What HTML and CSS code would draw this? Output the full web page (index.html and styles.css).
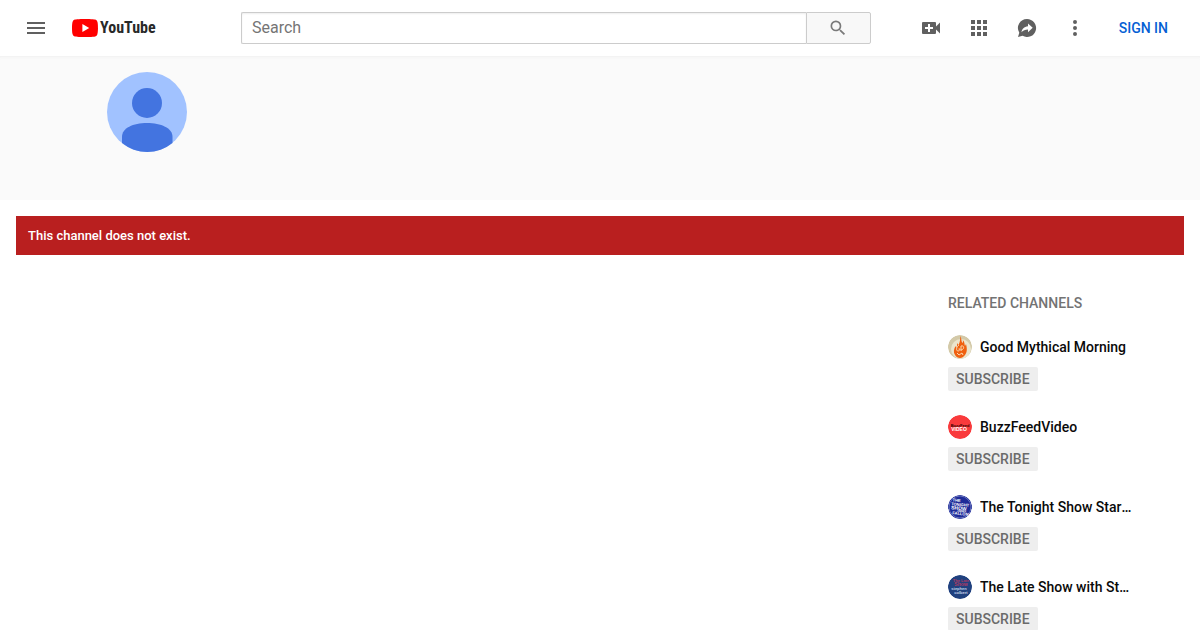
FILE: index.html
```html
<!DOCTYPE html>
<html lang="en">
<head>
    <meta charset="UTF-8">
    <meta name="viewport" content="width=device-width, initial-scale=1.0">
    <title>YouTube</title>
    <link rel="stylesheet" href="styles.css">
</head>
<body>
    <header class="masthead">
        <div class="start">
            <button class="icon-btn" aria-label="Guide">
                <svg viewBox="0 0 24 24"><path d="M3 18h18v-2H3v2zm0-5h18v-2H3v2zm0-7v2h18V6H3z"/></svg>
            </button>
            <a class="logo" href="/" aria-label="YouTube Home">
                <svg viewBox="0 0 26 18">
                    <path fill="#f00" d="M25.4 2.8A3.2 3.2 0 0 0 23.2.6C21.2 0 13 0 13 0S4.8 0 2.8.6A3.2 3.2 0 0 0 .6 2.8C0 4.8 0 9 0 9s0 4.2.6 6.2a3.2 3.2 0 0 0 2.2 2.2C4.8 18 13 18 13 18s8.2 0 10.2-.6a3.2 3.2 0 0 0 2.2-2.2C26 13.2 26 9 26 9s0-4.2-.6-6.2z"/>
                    <path fill="#fff" d="M10.4 12.9 17.2 9l-6.8-3.9z"/>
                </svg>
                <span>YouTube</span>
            </a>
        </div>
        <form class="search" role="search">
            <input type="text" placeholder="Search" aria-label="Search" autocomplete="off">
            <button aria-label="Search button">
                <svg viewBox="0 0 24 24"><path d="M15.5 14h-.79l-.28-.27A6.471 6.471 0 0 0 16 9.5 6.5 6.5 0 1 0 9.5 16c1.61 0 3.09-.59 4.23-1.57l.27.28v.79l5 4.99L20.49 19l-4.99-5zm-6 0C7.01 14 5 11.99 5 9.5S7.01 5 9.5 5 14 7.01 14 9.5 11.99 14 9.5 14z"/></svg>
            </button>
        </form>
        <div class="end">
            <button class="icon-btn" aria-label="Create">
                <svg viewBox="0 0 24 24"><path d="M17 10.5V7a1 1 0 0 0-1-1H4a1 1 0 0 0-1 1v10a1 1 0 0 0 1 1h12a1 1 0 0 0 1-1v-3.5l4 4v-11l-4 4zM14 13h-3v3H9v-3H6v-2h3V8h2v3h3v2z"/></svg>
            </button>
            <button class="icon-btn" aria-label="YouTube apps">
                <svg viewBox="0 0 24 24"><path d="M4 8h4V4H4v4zm6 12h4v-4h-4v4zm-6 0h4v-4H4v4zm0-6h4v-4H4v4zm6 0h4v-4h-4v4zm6-10v4h4V4h-4zm-6 4h4V4h-4v4zm6 6h4v-4h-4v4zm0 6h4v-4h-4v4z"/></svg>
            </button>
            <button class="icon-btn" aria-label="Messages">
                <svg viewBox="0 0 24 24">
                    <path d="M12 3a9 9 0 0 0-7.700 13.700L3 21l4.600-1.200A9 9 0 1 0 12 3z"/>
                    <path fill="#fff" d="M13 7.500v2.700c-4 .4-6 2.800-6.500 6 1.700-2 3.600-2.800 6.500-2.800v2.800l4.700-4.400z"/>
                </svg>
            </button>
            <button class="icon-btn" aria-label="Settings">
                <svg viewBox="0 0 24 24"><path d="M12 8a2 2 0 1 0 0-4 2 2 0 0 0 0 4zm0 2a2 2 0 1 0 0 4 2 2 0 0 0 0-4zm0 6a2 2 0 1 0 0 4 2 2 0 0 0 0-4z"/></svg>
            </button>
            <a class="sign-in" href="/signin">SIGN IN</a>
        </div>
    </header>

    <section class="channel-header">
        <svg class="channel-avatar" viewBox="0 0 80 80">
            <circle cx="40" cy="40" r="40" fill="#a1c2ff"/>
            <circle cx="40" cy="31" r="15" fill="#4374e0"/>
            <path fill="#4374e0" d="M15 71V65C15 56 26 51 40 51s25.500 5 25.500 14v6A40 40 0 0 1 15 71z"/>
        </svg>
    </section>

    <main>
        <div class="alert" role="alert">This channel does not exist.</div>
        <aside class="related">
            <h2>RELATED CHANNELS</h2>
            <ul>
                <li>
                    <a class="channel" href="/good-mythical-morning">
                        <svg viewBox="0 0 24 24">
                            <circle cx="12" cy="12" r="12" fill="#d3c9a8"/>
                            <circle cx="13" cy="14" r="10" fill="#ebe4cc"/>
                            <path fill="#f0600f" d="M12 1c2 3 1 5 2.500 7 .7-1 .5-2 .3-3 2 2 1.500 4 2.200 6l1-2c1 4 1.500 8-1 11-1.500 2-3 3-5 3s-4-1-5-3c-2-3-1-6 .5-9l.7 2c1-2 1-3 .8-5l1.500 2C12 7 12.500 4 12 1z"/>
                            <path fill="none" stroke="#f9d9b0" d="M11 10c-3 2-3 6-1 6 1 0 2-1 2-2h-1.500M13 11v5m0-5c4-1 3 4 0 4M9 18l2 2 3-2 1 2"/>
                        </svg>
                        <span>Good Mythical Morning</span>
                    </a>
                    <button class="subscribe">SUBSCRIBE</button>
                </li>
                <li>
                    <a class="channel" href="/buzzfeedvideo">
                        <svg viewBox="0 0 24 24">
                            <circle cx="12" cy="12" r="12" fill="#f93a3c"/>
                            <g class="art-text" text-anchor="middle">
                                <text x="12" y="12" font-size="4" fill="#300">BuzzFeed</text>
                                <text x="11" y="16" font-size="5" fill="#fff">VIDEO</text>
                            </g>
                        </svg>
                        <span>BuzzFeedVideo</span>
                    </a>
                    <button class="subscribe">SUBSCRIBE</button>
                </li>
                <li>
                    <a class="channel" href="/tonight-show">
                        <svg viewBox="0 0 24 24">
                            <circle cx="12" cy="12" r="12" fill="#1e2b98"/>
                            <circle cx="12" cy="12" r="11" fill="none" stroke="#6974bd"/>
                            <g class="art-text" text-anchor="middle" fill="#fff" transform="rotate(5 12 12)">
                                <text x="8" y="7" font-size="4">THE</text>
                                <text x="12" y="11" font-size="4">TONIGHT</text>
                                <text x="11" y="15" font-size="5">SHOW</text>
                                <text x="14" y="17" font-size="3">JIMMY</text>
                                <text x="13" y="20" font-size="4">FALLON</text>
                            </g>
                        </svg>
                        <span>The Tonight Show Starring Jimmy Fallon</span>
                    </a>
                    <button class="subscribe">SUBSCRIBE</button>
                </li>
                <li>
                    <a class="channel" href="/late-show">
                        <svg viewBox="0 0 24 24">
                            <circle cx="12" cy="12" r="12" fill="#20417f"/>
                            <g class="art-text" text-anchor="middle">
                                <text x="13" y="7" font-size="4" fill="#b03a63">The Late</text>
                                <text x="13" y="11" font-size="5" fill="#b03a63">Show</text>
                                <text x="11" y="15" font-size="4" fill="#c5d2e8">stephen</text>
                                <text x="13" y="19" font-size="4" fill="#c5d2e8">colbert</text>
                            </g>
                        </svg>
                        <span>The Late Show with Stephen Colbert</span>
                    </a>
                    <button class="subscribe">SUBSCRIBE</button>
                </li>
            </ul>
        </aside>
    </main>
</body>
</html>
```
FILE: styles.css
```css
*, *::before, *::after {
    box-sizing: border-box;
}
body, input, button {
    font-family: Roboto, "Liberation Sans", sans-serif;
}
body {
    margin: 0;
    background: white;
    color: #0a0a0a;
    font-size: 14px;
}
button {
    border: none;
    padding: 0;
    cursor: pointer;
}
a {
    color: inherit;
    text-decoration: none;
}
svg {
    display: block;
    flex: none;
}

/* masthead */
.masthead {
    display: flex;
    align-items: center;
    height: 56px;
    padding: 0 16px;
    background: white;
}
.start, .end {
    display: flex;
    align-items: center;
    flex: none;
}
.start {
    gap: 16px;
}
.end {
    gap: 8px;
}
.icon-btn {
    width: 40px;
    height: 40px;
    padding: 8px;
    background: none;
}
.icon-btn svg {
    width: 24px;
    height: 24px;
    fill: #606060;
}
.logo {
    display: flex;
    align-items: center;
    gap: 2px;
    width: 97px;
    color: #282828;
    font-family: "Liberation Sans Narrow", "Roboto Condensed", Roboto, sans-serif;
    font-size: 16px;
    font-weight: 700;
    line-height: 20px;
}
.logo svg {
    width: 26px;
    height: 18px;
}
.search {
    display: flex;
    flex: 1;
    height: 32px;
    margin: 0 40px 0 72px;
}
.search input {
    flex: 1;
    min-width: 0;
    padding: 0 10px 2px;
    border: 1px solid #ccc;
    border-right: none;
    border-radius: 2px 0 0 2px;
    box-shadow: inset 0 1px 2px #eee;
    color: #111;
    font-size: 16px;
}
.search input::placeholder {
    color: #757575;
}
.search button {
    width: 65px;
    display: flex;
    align-items: center;
    justify-content: center;
    border: 1px solid #ccc;
    border-radius: 0 2px 2px 0;
    background: #f8f8f8;
}
.search button svg {
    width: 20px;
    height: 20px;
    fill: #7a7a7a;
}
.sign-in {
    padding: 8px 16px;
    color: #065fd4;
    font-weight: 500;
}

/* channel */
.channel-header {
    padding: 16px 107px 48px;
    background: #fafafa;
    box-shadow: inset 0 3px 3px -2px #f0f0f0;
}
.channel-avatar {
    width: 80px;
    height: 80px;
}
main {
    padding: 16px 16px 0;
}
.alert {
    padding: 12px;
    background: #b91f1f;
    color: white;
    font-size: 13px;
    font-weight: 500;
    line-height: 15px;
}

/* related channels */
.related {
    width: 236px;
    margin-left: auto;
    padding-top: 40px;
}
.related h2 {
    margin: 0 0 24px;
    color: #737373;
    font-size: 14px;
    font-weight: 500;
    line-height: 16px;
}
.related ul {
    margin: 0;
    padding: 0;
    list-style: none;
}
.related li {
    height: 80px;
}
.related li:last-child {
    height: 56px;
}
.channel {
    display: flex;
    align-items: center;
    gap: 8px;
    width: 188px;
    margin-bottom: 8px;
    font-weight: 500;
    line-height: 24px;
}
.channel svg {
    width: 24px;
    height: 24px;
    border-radius: 50%;
}
.channel span {
    overflow: hidden;
    text-overflow: ellipsis;
    white-space: nowrap;
}
.art-text {
    font-family: "Liberation Sans", sans-serif;
    font-weight: 700;
}
.subscribe {
    height: 24px;
    padding: 0 8px;
    border-radius: 2px;
    background: #eee;
    color: #6b6b6b;
    font-size: 14px;
    font-weight: 500;
}
```
